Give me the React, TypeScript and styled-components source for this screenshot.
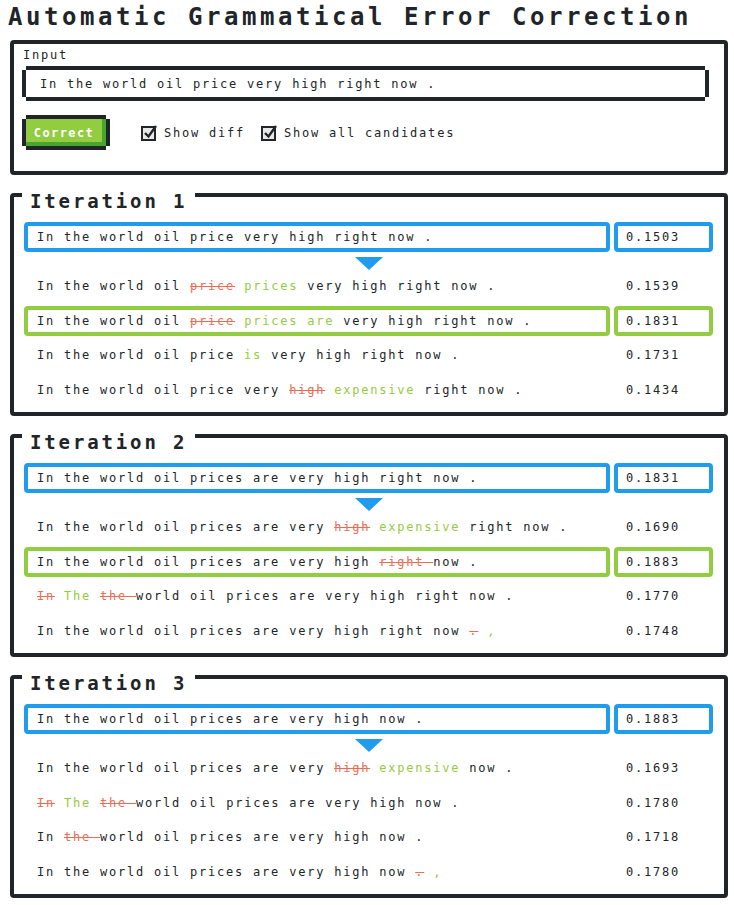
import React from "react";
import styled, { createGlobalStyle } from "styled-components";

const DARK = "#212529";
const BLUE = "#209cee";
const GREEN = "#92cc41";
const RED = "#e76e55";

const GlobalStyle = createGlobalStyle`
  body {
    margin: 0;
    background: #fff;
    color: ${DARK};
    font-family: "DejaVu Sans Mono", "Liberation Mono", monospace;
  }
`;

const Page = styled.div`
  padding: 2px 6px 8px 10px;
`;

const Heading = styled.h1`
  margin: 0 0 8px -2px;
  font-size: 24px;
  line-height: 30px;
  font-weight: bold;
  letter-spacing: 3.55px;
  white-space: nowrap;
`;

const Panel = styled.div`
  border: 4px solid ${DARK};
  border-radius: 4px;
  padding: 4px 15px 21px 8px;
`;

const Label = styled.div`
  font-size: 12px;
  line-height: 14px;
  letter-spacing: 1.78px;
  padding-left: 1px;
`;

const InputWrap = styled.div`
  display: flex;
  margin-top: 4px;
`;

const TextInput = styled.input`
  flex: 1;
  margin: 4px;
  height: 27px;
  box-sizing: border-box;
  border: 0;
  outline: none;
  padding: 0 14px;
  font-family: inherit;
  font-size: 12px;
  letter-spacing: 1.78px;
  color: ${DARK};
  background: #fff;
  box-shadow: 0 -4px ${DARK}, 0 4px ${DARK}, -4px 0 ${DARK}, 4px 0 ${DARK};
`;

const Controls = styled.div`
  display: flex;
  align-items: center;
  margin-top: 14px;
`;

const Button = styled.button`
  margin: 4px;
  width: 80px;
  height: 27px;
  border: 0;
  padding: 0 4px 0 0;
  background: ${GREEN};
  color: #fff;
  font-family: inherit;
  font-size: 12px;
  font-weight: bold;
  letter-spacing: 1.4px;
  text-align: center;
  cursor: pointer;
  box-shadow: inset -4px -4px #4aa52e, 0 -4px ${DARK}, 0 4px ${DARK}, -4px 0 ${DARK},
    4px 0 ${DARK};
`;

const Check = styled.label<{ $first?: boolean }>`
  display: flex;
  align-items: center;
  gap: 6px;
  margin-left: ${(p) => (p.$first ? "31px" : "16px")};
  font-size: 12px;
  letter-spacing: 1.78px;
  white-space: nowrap;
`;

const IterBox = styled.section`
  margin-top: 18px;
  border: 4px solid ${DARK};
  border-radius: 4px;
  padding: 0 11px 7px 10px;
`;

const IterTitle = styled.h2`
  margin: -6px 0 11px -2px;
  padding: 0 8px;
  width: fit-content;
  background: #fff;
  font-size: 19px;
  line-height: 20px;
  font-weight: bold;
  letter-spacing: 2.86px;
`;

const Rows = styled.div`
  display: flex;
  flex-direction: column;
  gap: 4.6px;
`;

const Row = styled.div`
  display: grid;
  grid-template-columns: 1fr 99px;
  gap: 4px;
  height: 30px;
`;

const Cell = styled.div<{ $tone?: string; $score?: boolean }>`
  display: flex;
  align-items: center;
  box-sizing: border-box;
  border: 4px solid ${(p) => p.$tone || "transparent"};
  border-radius: 4px;
  padding: 0 ${(p) => (p.$score ? "8px" : "9px")};
  font-size: 12px;
  letter-spacing: 1.78px;
`;

const Line = styled.span`
  white-space: pre;
`;

const Arrow = styled.div`
  display: flex;
  justify-content: center;
  height: 10px;
`;

const Triangle = styled.div`
  width: 0;
  height: 0;
  border-left: 14px solid transparent;
  border-right: 14px solid transparent;
  border-top: 13px solid ${BLUE};
`;

const Del = styled.span`
  color: ${RED};
  text-decoration: line-through;
`;

const Ins = styled.span`
  color: ${GREEN};
`;

const CheckIcon = () => (
  <svg width="17" height="17" viewBox="0 0 17 17">
    <rect x="1" y="3" width="13" height="13" fill="#e8e8e8" stroke={DARK} strokeWidth="2" />
    <path d="M4 9 L7.5 12.5 L15 2" fill="none" stroke={DARK} strokeWidth="2.4" />
  </svg>
);

// "[-x-]" is a deletion, "{+x+}" an insertion
function Diff({ text }: { text: string }) {
  const parts = text.split(/(\[-.*?-\]|\{\+.*?\+\})/);
  return (
    <Line>
      {parts.map((p, i) => {
        if (p.startsWith("[-")) return <Del key={i}>{p.slice(2, -2)}</Del>;
        if (p.startsWith("{+")) return <Ins key={i}>{p.slice(2, -2)}</Ins>;
        return <React.Fragment key={i}>{p}</React.Fragment>;
      })}
    </Line>
  );
}

type Cand = { text: string; score: string; best?: boolean };
type Iter = { input: string; score: string; cands: Cand[] };

const iterations: Iter[] = [
  {
    input: "In the world oil price very high right now .",
    score: "0.1503",
    cands: [
      { text: "In the world oil [-price-] {+prices+} very high right now .", score: "0.1539" },
      { text: "In the world oil [-price-] {+prices are+} very high right now .", score: "0.1831", best: true },
      { text: "In the world oil price {+is+} very high right now .", score: "0.1731" },
      { text: "In the world oil price very [-high-] {+expensive+} right now .", score: "0.1434" },
    ],
  },
  {
    input: "In the world oil prices are very high right now .",
    score: "0.1831",
    cands: [
      { text: "In the world oil prices are very [-high-] {+expensive+} right now .", score: "0.1690" },
      { text: "In the world oil prices are very high [-right -]now .", score: "0.1883", best: true },
      { text: "[-In-] {+The+} [-the -]world oil prices are very high right now .", score: "0.1770" },
      { text: "In the world oil prices are very high right now [-.-] {+,+}", score: "0.1748" },
    ],
  },
  {
    input: "In the world oil prices are very high now .",
    score: "0.1883",
    cands: [
      { text: "In the world oil prices are very [-high-] {+expensive+} now .", score: "0.1693" },
      { text: "[-In-] {+The+} [-the -]world oil prices are very high now .", score: "0.1780" },
      { text: "In [-the -]world oil prices are very high now .", score: "0.1718" },
      { text: "In the world oil prices are very high now [-.-] {+,+}", score: "0.1780" },
    ],
  },
];

export default function App() {
  return (
    <Page>
      <GlobalStyle />
      <Heading>Automatic Grammatical Error Correction</Heading>
      <Panel>
        <Label>Input</Label>
        <InputWrap>
          <TextInput defaultValue="In the world oil price very high right now ." />
        </InputWrap>
        <Controls>
          <Button>Correct</Button>
          <Check $first>
            <CheckIcon />
            Show diff
          </Check>
          <Check>
            <CheckIcon />
            Show all candidates
          </Check>
        </Controls>
      </Panel>
      {iterations.map((it, n) => (
        <IterBox key={n}>
          <IterTitle>Iteration {n + 1}</IterTitle>
          <Rows>
            <Row>
              <Cell $tone={BLUE}>
                <Line>{it.input}</Line>
              </Cell>
              <Cell $tone={BLUE} $score>
                {it.score}
              </Cell>
            </Row>
            <Arrow>
              <Triangle />
            </Arrow>
            {it.cands.map((c, i) => (
              <Row key={i}>
                <Cell $tone={c.best ? GREEN : undefined}>
                  <Diff text={c.text} />
                </Cell>
                <Cell $tone={c.best ? GREEN : undefined} $score>
                  {c.score}
                </Cell>
              </Row>
            ))}
          </Rows>
        </IterBox>
      ))}
    </Page>
  );
}
